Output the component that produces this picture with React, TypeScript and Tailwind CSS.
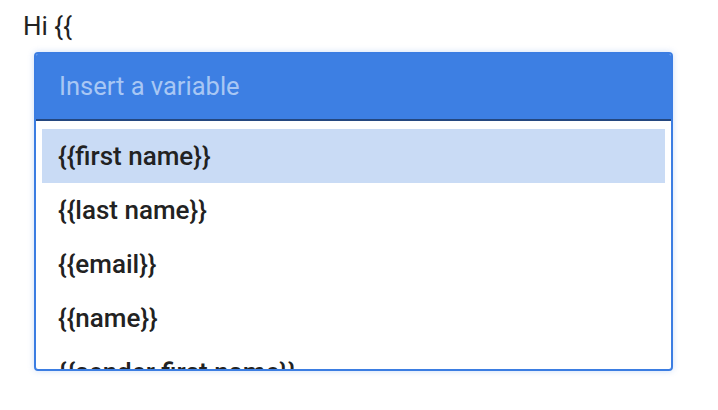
import React from 'react';

const variables = ['first name', 'last name', 'email', 'name', 'sender first name'];

export default function App() {
  return (
    <div className="h-[410px] w-[718px] bg-white font-['Roboto',sans-serif] text-[#222]">
      <div className="pl-[23px] pt-[11px] text-[26px] leading-[30px]">Hi {'{{'}</div>
      <div className="ml-[34px] mt-[11px] w-[639px] h-[319px] flex flex-col rounded-[4px] border-2 border-[#3b7de2] shadow-[0_0_6px_rgba(59,125,226,0.25)] overflow-hidden">
        <div className="h-[69px] shrink-0 bg-[#3d7fe3] border border-b-2 border-[#24477f] rounded-t-[3px] -m-[2px] mb-0 flex items-center pl-[24px] text-[25.5px] text-[#a8c7f4]">
          Insert a variable
        </div>
        <div className="flex-1 overflow-hidden px-[6px] pt-[8px]">
          {variables.map((v, i) => (
            <div
              key={v}
              className={`h-[54px] flex items-center pl-[16px] text-[26px] font-medium ${i === 0 ? 'bg-[#c9dbf5]' : ''}`}
            >
              {'{{' + v + '}}'}
            </div>
          ))}
        </div>
      </div>
    </div>
  );
}
